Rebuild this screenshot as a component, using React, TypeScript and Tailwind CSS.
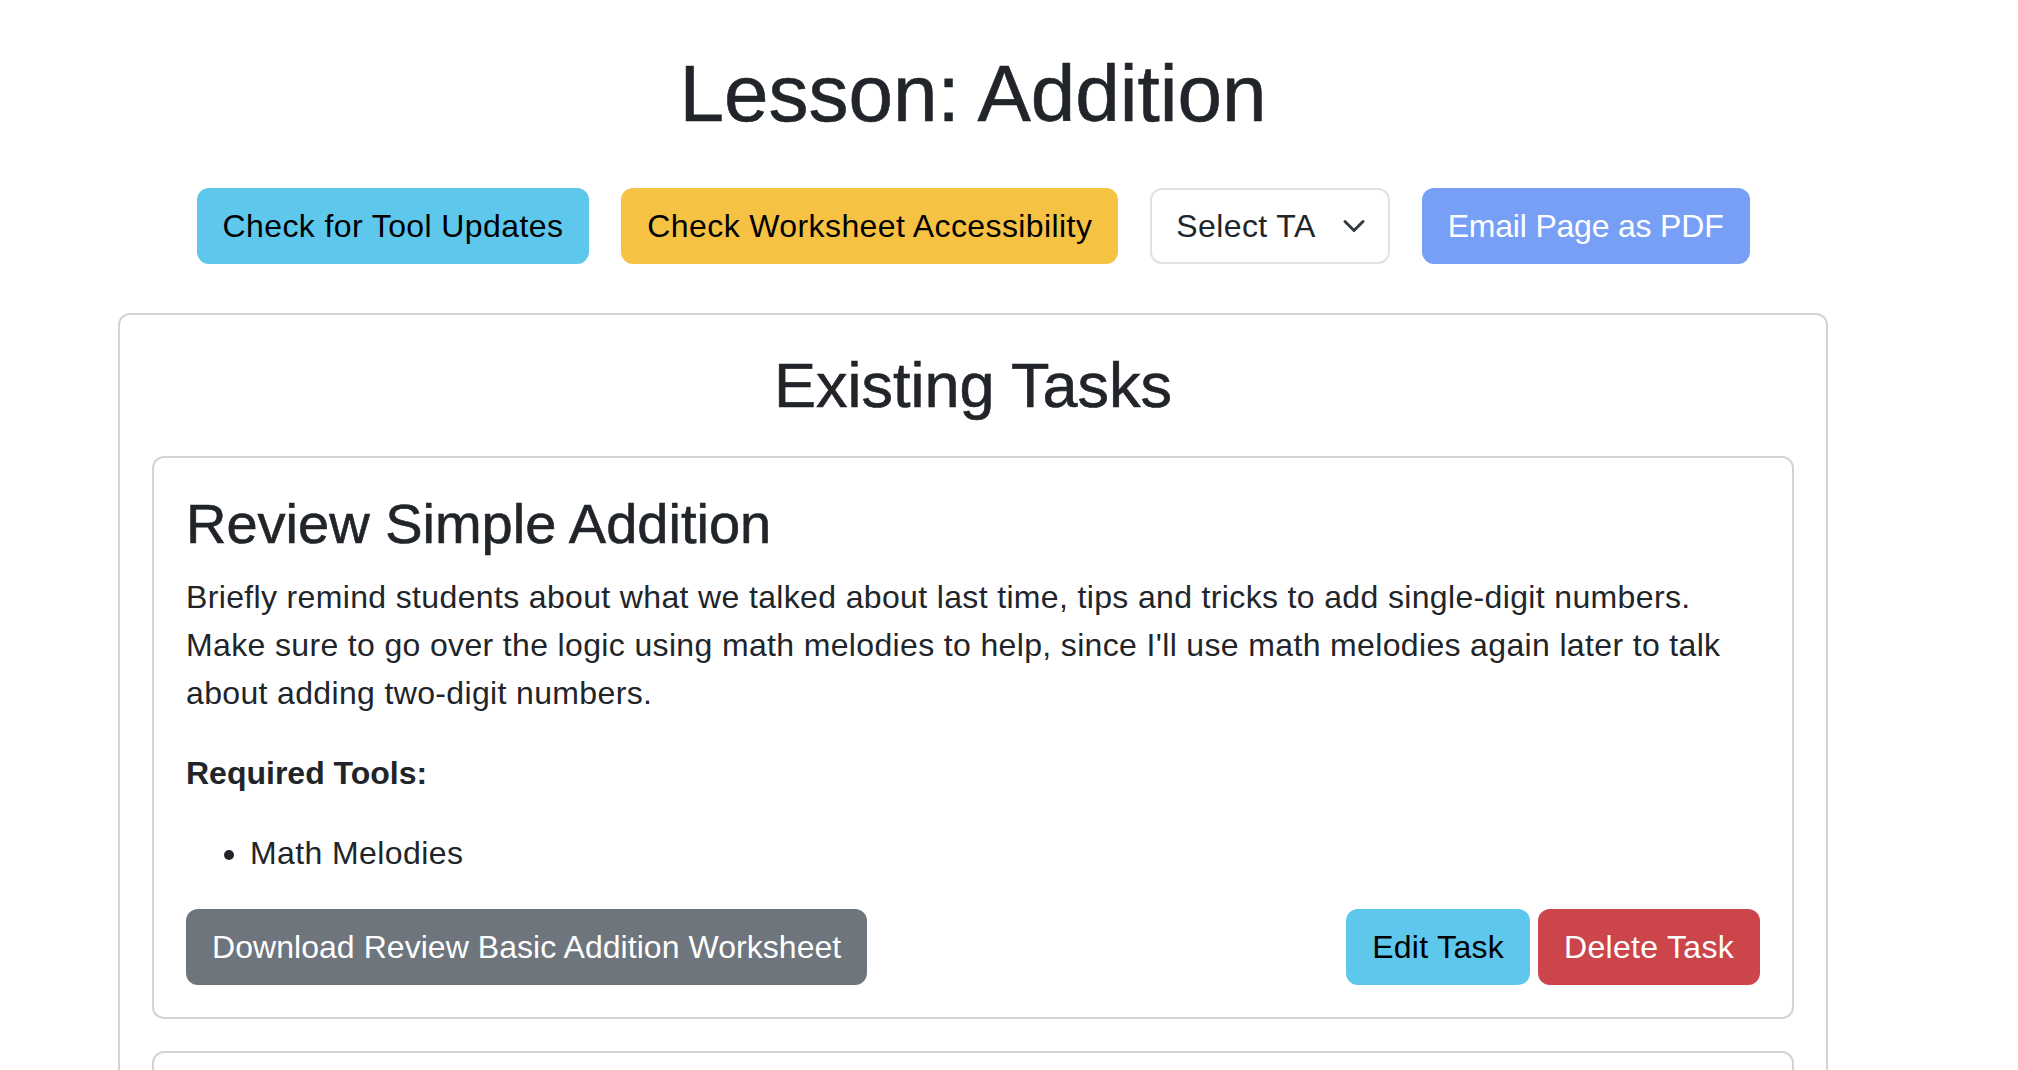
const font = { fontFamily: '"Liberation Sans", Arial, sans-serif' };

function Chevron() {
  return (
    <svg width="24" height="24" viewBox="0 0 16 16" fill="none" className="absolute right-[24px] top-1/2 -translate-y-1/2">
      <path d="m2 5 6 6 6-6" stroke="#343a40" strokeWidth="2" strokeLinecap="round" strokeLinejoin="round" />
    </svg>
  );
}

const btn = 'rounded-[12px] border-2 border-transparent px-[24px] py-[12px] text-[32px] leading-[48px]';
const heading = 'font-medium [-webkit-text-stroke:0.6px_#212529]';

export default function App() {
  return (
    <div style={font} className="min-h-screen bg-white text-[#212529]">
      <div className="w-[1946px] px-[118px] pt-[46px]">
        <h1 className={`text-center text-[80px] leading-[96px] ${heading}`}>Lesson: Addition</h1>

        <div className="mt-[46px] flex justify-center gap-[32px]">
          <button className={`${btn} tracking-[0.4px] bg-[#5dc8ec] text-black`}>Check for Tool Updates</button>
          <button className={`${btn} tracking-[0.4px] bg-[#f6c244] text-black`}>Check Worksheet Accessibility</button>
          <div className="relative">
            <div className="rounded-[12px] border-2 border-[#dee2e6] bg-white py-[12px] pl-[24px] pr-[72px] text-[32px] leading-[48px] tracking-[0.4px]">
              Select TA
            </div>
            <Chevron />
          </div>
          <button className={`${btn} tracking-[-0.2px] bg-[#789ff6] text-white`}>Email Page as PDF</button>
        </div>

        <div className="mt-[49px] rounded-[12px] border-2 border-[#d3d3d4] p-[32px]">
          <h2 className={`mb-[32px] text-center text-[63px] leading-[77px] ${heading}`}>Existing Tasks</h2>

          <div className="mb-[32px] rounded-[12px] border-2 border-[#d3d3d4] p-[32px]">
            <h3 className={`mb-[16px] text-[56px] leading-[67px] ${heading}`}>Review Simple Addition</h3>
            <p className="mb-[32px] text-[32px] leading-[48px] tracking-[0.35px]">
              Briefly remind students about what we talked about last time, tips and tricks to add single-digit numbers.
              <br />
              Make sure to go over the logic using math melodies to help, since I'll use math melodies again later to talk
              <br />
              about adding two-digit numbers.
            </p>
            <p className="mb-[32px] text-[32px] leading-[48px] font-bold">Required Tools:</p>
            <ul className="mb-[32px] list-disc pl-[64px] text-[32px] leading-[48px] tracking-[0.4px]">
              <li>Math Melodies</li>
            </ul>
            <div className="flex items-center justify-between">
              <button className={`${btn} tracking-[0.05px] bg-[#6e757c] text-white`}>Download Review Basic Addition Worksheet</button>
              <div className="flex gap-[8px]">
                <button className={`${btn} tracking-[0.3px] bg-[#5dc8ec] text-black`}>Edit Task</button>
                <button className={`${btn} tracking-[0.3px] bg-[#cb454b] text-white`}>Delete Task</button>
              </div>
            </div>
          </div>

          <div className="h-[400px] rounded-[12px] border-2 border-[#d3d3d4]" />
        </div>
      </div>
    </div>
  );
}
